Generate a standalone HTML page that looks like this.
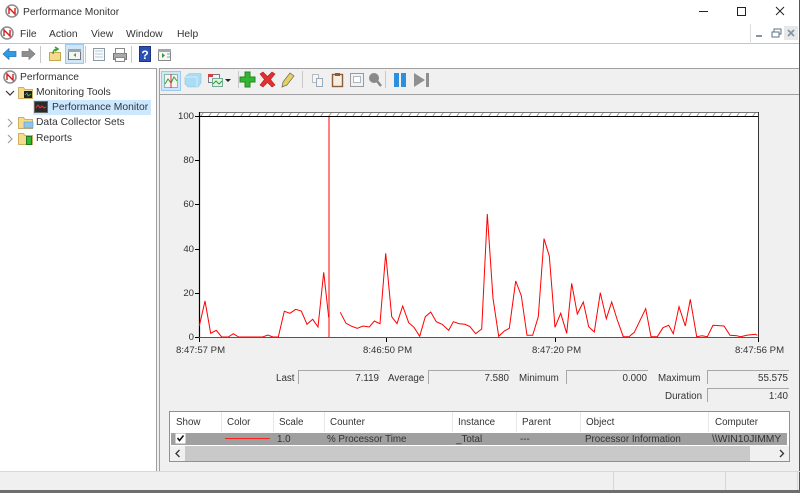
<!DOCTYPE html>
<html><head><meta charset="utf-8"><title>Performance Monitor</title>
<style>
html,body{margin:0;padding:0;width:800px;height:493px;overflow:hidden;background:#f0f0f0}
body{position:relative;font-family:"Liberation Sans",sans-serif;font-size:10.3px;color:#333}
.a{position:absolute}
.t{position:absolute;white-space:nowrap;line-height:13px}
.r{text-align:right}
.n{font-size:9.6px}
.l{font-size:9.8px}
.v{position:absolute;height:13px;width:81px;border-left:1px solid #a8a8a8;border-top:1px solid #a8a8a8;background:#f0f0f0;text-align:right;line-height:15px;box-sizing:content-box;color:#333;font-size:9.8px}
.v span{padding-right:1px}
.h{position:absolute;top:412px;height:20px;border-right:1px solid #e8e8e8;box-sizing:border-box}
svg{position:absolute;overflow:visible}
</style></head><body>
<div class="a" style="left:0;top:0;width:800px;height:68px;background:#fff"></div>
<div class="a" style="left:0;top:43px;width:800px;height:1px;background:#c4c4c4"></div>
<div class="a" style="left:0;top:68px;width:157px;height:403px;background:#fff;border-top:1px solid #a0a0a0;border-right:1px solid #a0a0a0;box-sizing:border-box"></div>
<div class="a" style="left:159px;top:68px;width:641px;height:403px;background:#f0f0f0;border-top:1px solid #a0a0a0;border-left:1px solid #a0a0a0;box-sizing:border-box"></div>
<div class="a" style="left:160px;top:94px;width:639px;height:1px;background:#a0a0a0"></div>
<div class="a" style="left:799px;top:0;width:1px;height:493px;background:#555"></div>
<div class="a" style="left:0;top:471px;width:800px;height:1px;background:#d8d8d8"></div>
<div class="a" style="left:0;top:472px;width:799px;height:18px;background:#f0f0f0"></div>
<div class="a" style="left:0;top:490px;width:800px;height:3px;background:#6e6e6e"></div>
<div class="a" style="left:613px;top:472px;width:1px;height:18px;background:#d8d8d8"></div>
<div class="a" style="left:725px;top:472px;width:1px;height:18px;background:#d8d8d8"></div>
<div class="a" style="left:797px;top:472px;width:1px;height:18px;background:#d8d8d8"></div>

<svg width="0" height="0" style="left:0;top:0"><defs>
<g id="pm"><circle cx="7" cy="7" r="6" fill="#fff" stroke="#8d8d8d" stroke-width="1.6"/><path d="M4 10V4L10 10V4" fill="none" stroke="#d02020" stroke-width="1.4"/></g>
<g id="folder"><path d="M.5 3.5V14.5H14.5V5.5H7L5.500 3.500Z" fill="#f4dc8c" stroke="#cdb066"/></g>
</defs></svg>

<!-- title -->
<svg style="left:5px;top:4px" width="14" height="14"><use href="#pm"/></svg>
<div class="t" style="left:23px;top:6px">Performance Monitor</div>
<svg style="left:680px;top:0" width="120" height="22" fill="none" stroke="#222"><path d="M19 11.500H28"/><rect x="57.500" y="7.500" width="8" height="8"/><path d="M96 7L104 15M104 7L96 15"/></svg>

<!-- menu -->
<svg style="left:0;top:26px" width="14" height="14"><use href="#pm"/></svg>
<div class="t" style="left:20px;top:27px;margin-top:0.5px">File</div>
<div class="t" style="left:49px;top:27px;margin-top:0.5px">Action</div>
<div class="t" style="left:91px;top:27px;margin-top:0.5px">View</div>
<div class="t" style="left:126px;top:27px;margin-top:0.5px">Window</div>
<div class="t" style="left:177px;top:27px;margin-top:0.5px">Help</div>
<div class="a" style="left:750px;top:24px;width:1px;height:20px;background:#ddd"></div>
<svg style="left:752px;top:26px" width="46" height="15" fill="none"><rect x="0" y="0" width="14" height="14" fill="#fff"/><path d="M4 10H10" stroke="#5a7184" stroke-width="1.500"/><path d="M20 6H27V11H20ZM22 6V3H29V8H27" stroke="#5a7184"/><rect x="32" y="0" width="14" height="14" fill="#e8e8e8"/><path d="M36 4L42 10M42 4L36 10" stroke="#7d95a6" stroke-width="1.600"/></svg>

<!-- main toolbar -->
<svg style="left:0;top:44px" width="190" height="24">
<path d="M3 10L9 4.500V7.500H16V12.500H9V15.500Z" fill="#2e9be6" stroke="#1e6fb8" stroke-width=".7"/>
<path d="M35 10L29 4.500V7.500H22V12.500H29V15.500Z" fill="#8e8e8e" stroke="#777" stroke-width=".7"/>
<rect x="40" y="2" width="1" height="17" fill="#c8c8c8"/>
<path d="M49.500 8.500V16.500H60.500V8.500Z" fill="#f4dc8c" stroke="#c8a64e"/><path d="M53 10C53 6 55 5 58 5M55 3L58 5L55 7" fill="none" stroke="#39a339" stroke-width="1.600"/>
<rect x="65.500" y=".5" width="18" height="19" fill="#cfe6f8" stroke="#9ccaef"/>
<rect x="68.500" y="5.500" width="12" height="10" fill="#f6f6f6" stroke="#777"/><path d="M68 5H81V8H68Z" fill="#9aa5ae"/><path d="M76 9V13L73.500 11Z" fill="#3aa53a"/>
<rect x="85" y="2" width="1" height="17" fill="#c8c8c8"/>
<rect x="93.500" y="4.500" width="11" height="12" fill="#fafafa" stroke="#8a9aa5"/><path d="M95 7H103M95 10H103M95 13H103" stroke="#bcd"/>
<path d="M113.500 9.500H126.500V15.500H113.500Z" fill="#a8a8a8" stroke="#777"/><rect x="115.500" y="4.500" width="9" height="5" fill="#fff" stroke="#888"/><rect x="115.500" y="13.500" width="9" height="4" fill="#fff" stroke="#888"/>
<rect x="131" y="2" width="1" height="17" fill="#c8c8c8"/>
<rect x="139.500" y="2.500" width="11" height="15" fill="#2b4fb5" stroke="#1d3480"/>
<text x="145" y="15" font-family="Liberation Sans" font-size="12" font-weight="bold" fill="#fff" text-anchor="middle">?</text>
<rect x="158.500" y="5.500" width="12" height="11" fill="#f6f6f6" stroke="#888"/><path d="M158 5H171V8H158Z" fill="#a0a8ae"/><path d="M162 9V14L165 11.500Z" fill="#2f9c2f"/><path d="M167 10H170M167 13H170" stroke="#7aa"/>
</svg>

<!-- tree -->
<svg style="left:3px;top:70px" width="14" height="14"><use href="#pm"/></svg>
<div class="t" style="left:20px;top:71px">Performance</div>
<svg style="left:5px;top:88px" width="10" height="10" fill="none" stroke="#333" stroke-width="1.200"><path d="M1 3L5 7L9 3"/></svg>
<svg style="left:18px;top:84px" width="15" height="15"><use href="#folder"/><rect x="6" y="7" width="8" height="7" fill="#222"/><path d="M7 11L9 9L10 12L13 10" stroke="#4c4" fill="none" stroke-width=".8"/></svg>
<div class="t" style="left:36px;top:86px">Monitoring Tools</div>
<div class="a" style="left:33px;top:100px;width:118px;height:15px;background:#cce8ff"></div>
<svg style="left:34px;top:101px" width="14" height="12"><rect x=".5" y=".5" width="13" height="11" fill="#2a2a2a" stroke="#666"/><path d="M2 7L4 4L6 7L8 5L10 7L12 6" stroke="#e33" fill="none"/></svg>
<div class="t" style="left:52px;top:101px">Performance Monitor</div>
<svg style="left:5px;top:118px" width="10" height="10" fill="none" stroke="#a0a0a0" stroke-width="1.200"><path d="M3 1L7 5L3 9"/></svg>
<svg style="left:18px;top:114px" width="15" height="15"><use href="#folder"/><rect x="6" y="8" width="9" height="6" fill="#8ec5e8" stroke="#5a9cc8" stroke-width=".6"/></svg>
<div class="t" style="left:36px;top:116px">Data Collector Sets</div>
<svg style="left:5px;top:134px" width="10" height="10" fill="none" stroke="#a0a0a0" stroke-width="1.200"><path d="M3 1L7 5L3 9"/></svg>
<svg style="left:18px;top:130px" width="15" height="15"><use href="#folder"/><rect x="8.500" y="6.500" width="5" height="8" fill="#33b533" stroke="#1c7c1c"/></svg>
<div class="t" style="left:36px;top:132px">Reports</div>

<!-- pane toolbar -->
<svg style="left:160px;top:69px" width="280" height="24">
<rect x="1.500" y="2.500" width="19" height="19" fill="#cfe6f8" stroke="#9ccaef"/>
<rect x="4.500" y="5.500" width="13" height="13" fill="#f4f4f4" stroke="#8ba"/><path d="M5 15L8 10L11 14L14 8L17 12" fill="none" stroke="#2fa52f"/><path d="M11 5V19" stroke="#e23"/>
<path d="M25 8L29 4.500H41V14L38 18H28L25 15Z" fill="#a9dcf5" stroke="#8fc4de" stroke-width=".6"/><path d="M25 8H37V18" fill="none" stroke="#d5eef9"/>
<rect x="48.500" y="5.500" width="11" height="8" fill="#f3f3f3" stroke="#778"/><rect x="48" y="5" width="5" height="3" fill="#d04040"/><rect x="52.500" y="9.500" width="10" height="8" fill="#e3f2e3" stroke="#7a9"/><path d="M53 15L56 12L59 15L62 12" stroke="#2a2" fill="none"/>
<path d="M65 10H71L68 13Z" fill="#222"/>
<rect x="78" y="2" width="1" height="17" fill="#c8c8c8"/>
<path d="M85 3H90V8H95V13H90V18H85V13H80V8H85Z" fill="#34b534" stroke="#1f8a1f"/>
<path d="M100 5L103 3L107.500 7.500L112 3L115 5L110.500 10.500L115 16L112 18L107.500 13.500L103 18L100 16L104.500 10.500Z" fill="#e03030" stroke="#b22020" stroke-width=".6"/>
<path d="M122 18L123 13L130 4L134 7L127 16Z" fill="#e8d060" stroke="#666" stroke-width=".7"/>
<rect x="142" y="2" width="1" height="17" fill="#c8c8c8"/>
<rect x="152.500" y="5.500" width="6" height="8" fill="#f5f5f5" stroke="#bbb"/><rect x="156.500" y="9.500" width="6" height="8" fill="#f5f5f5" stroke="#9ab"/>
<rect x="172.500" y="5.500" width="10" height="12" fill="#f4eee0" stroke="#8a5c38" stroke-width="1.400"/><rect x="175" y="4" width="5" height="3" fill="#8a5c38"/>
<rect x="190.500" y="4.500" width="13" height="13" fill="#f2f2f2" stroke="#9a9a9a"/><rect x="193.500" y="7.500" width="7" height="6" fill="#fff" stroke="#a9b9c4"/>
<circle cx="214" cy="9" r="4.500" fill="#8a8a8a" stroke="#888"/><path d="M217 12L221 17" stroke="#888" stroke-width="2.500"/>
<rect x="225" y="2" width="1" height="17" fill="#c8c8c8"/>
<rect x="234" y="4" width="5" height="14" fill="#2e8fdc"/><rect x="241" y="4" width="5" height="14" fill="#2e8fdc"/>
<path d="M254 4L265 11L254 18Z" fill="#8f8f8f"/><rect x="266" y="4" width="3" height="14" fill="#8f8f8f"/>
</svg>

<!-- graph -->
<svg style="left:0;top:0" width="800" height="493">
<defs><pattern id="ht" width="8" height="5" patternUnits="userSpaceOnUse" patternTransform="translate(199 112)"><path d="M1 5L5 0" stroke="#888" stroke-width=".8"/></pattern></defs>
<rect x="199" y="116" width="559" height="221" fill="#fff"/>
<rect x="199" y="112" width="559" height="4" fill="#fff"/>
<rect x="199" y="112" width="559" height="4" fill="url(#ht)"/>
<path d="M199 112.500H758" stroke="#777"/>
<path d="M199 116.500H758" stroke="#000"/>
<path d="M199.500 112V338" stroke="#000" stroke-width="1.200"/>
<path d="M758.500 112V338" stroke="#333"/>
<path d="M199 337.500H758" stroke="#555"/>
<path d="M195 116.500H199M195 160.500H199M195 204.500H199M195 249.500H199M195 293.500H199M195 337.500H199M199.500 338V342M386.500 338V342M555.500 338V342M758.500 338V342" stroke="#000"/>
<rect x="328" y="117" width="2" height="220" fill="#ff8080"/>
<polyline fill="none" stroke="#ff0000" stroke-width="1" points="199.3,326 205,301 210.700,333.300 216.300,330.300 221.700,337 228.300,337 233.300,333.700 238.700,337 262.700,337 267.700,335 273,337 278.300,337 284.300,311.300 290,313.300 295.700,309.300 301.300,311 307,324.300 312.700,319.300 318,327 323.700,272.300 328.700,317.300"/>
<polyline fill="none" stroke="#ff0000" stroke-width="1" points="340.300,312.300 346,323.300 351.700,326.300 357.300,328.300 363,326 369.300,327 374.300,321 380,323.700 385.700,253.300 391.700,316.700 397,323.700 402.700,306 408.700,322.700 414,327.300 419.700,336.300 425.300,316.700 430.700,312 436.300,321.700 442,324.300 448.700,330.300 453.300,321.700 459.300,323.700 465,324.300 470,326.700 475.700,333.700 481.700,329 487.300,214 493,298.300 498.700,336.300 504.300,331 509.300,328.300 515.700,281 521.300,295.700 527,335.300 532.700,335.300 538.300,316.700 544,238.700 549.300,256 555,327.300 560.700,313.300 566.700,333.300 571.700,283.300 577.300,314 583.300,302 588.700,326.700 594.300,332 600.300,292.700 606.300,318.700 611.700,302 617.300,320 623.300,336.700 629,336.700 634.300,332.300 645.700,308.700 651,336.700 657.300,336.700 663,327.700 668.700,325.300 673.300,333.700 679,306.700 685.300,326 690.300,299.300 696.700,336.700 702,335.700 707.300,336.700 713,325.300 724,326 730,335.300 736.700,335.700 740.700,336.700 746.700,335.300 755.300,334.300 757.300,335.300"/>
</svg>
<div class="t r n" style="left:165px;width:29px;top:110px">100</div>
<div class="t r n" style="left:165px;width:29px;top:154px">80</div>
<div class="t r n" style="left:165px;width:29px;top:198px">60</div>
<div class="t r n" style="left:165px;width:29px;top:243px">40</div>
<div class="t r n" style="left:165px;width:29px;top:287px">20</div>
<div class="t r n" style="left:165px;width:29px;top:331px">0</div>
<div class="t n" style="left:176px;top:344px">8:47:57 PM</div>
<div class="t n" style="left:363px;top:344px">8:46:50 PM</div>
<div class="t n" style="left:532px;top:344px">8:47:20 PM</div>
<div class="t n" style="left:735px;top:344px">8:47:56 PM</div>

<!-- stats -->
<div class="t l" style="left:276px;top:372px">Last</div>
<div class="v" style="left:298px;top:370px"><span>7.119</span></div>
<div class="t l" style="left:388px;top:372px">Average</div>
<div class="v" style="left:428px;top:370px"><span>7.580</span></div>
<div class="t l" style="left:519px;top:372px">Minimum</div>
<div class="v" style="left:566px;top:370px"><span>0.000</span></div>
<div class="t l" style="left:658px;top:372px">Maximum</div>
<div class="v" style="left:707px;top:370px"><span>55.575</span></div>
<div class="t l" style="left:665px;top:390px">Duration</div>
<div class="v" style="left:707px;top:388px"><span>1:40</span></div>

<!-- legend -->
<div class="a" style="left:169px;top:411px;width:621px;height:51px;background:#fff;border:1px solid #8a929a;box-sizing:border-box"></div>
<div class="h" style="left:170px;width:52px"></div>
<div class="h" style="left:222px;width:52px"></div>
<div class="h" style="left:274px;width:51px"></div>
<div class="h" style="left:325px;width:128px"></div>
<div class="h" style="left:453px;width:64px"></div>
<div class="h" style="left:517px;width:64px"></div>
<div class="h" style="left:581px;width:128px"></div>
<div class="t l" style="left:176px;top:416px">Show</div>
<div class="t l" style="left:227px;top:416px">Color</div>
<div class="t l" style="left:279px;top:416px">Scale</div>
<div class="t l" style="left:330px;top:416px">Counter</div>
<div class="t l" style="left:458px;top:416px">Instance</div>
<div class="t l" style="left:522px;top:416px">Parent</div>
<div class="t l" style="left:586px;top:416px">Object</div>
<div class="t l" style="left:715px;top:416px">Computer</div>
<div class="a" style="left:171px;top:433px;width:616px;height:12px;background:#a0a0a0"></div>
<svg style="left:175px;top:433px" width="11" height="12"><rect x=".5" y=".5" width="10" height="10" fill="#fff"/><path d="M2.500 5L4.500 7.500L8.500 2.500" fill="none" stroke="#111" stroke-width="1.500"/></svg>
<div class="a" style="left:225px;top:438px;width:45px;height:1px;background:#ff2020"></div>
<div class="t l" style="left:277px;top:433px">1.0</div>
<div class="t l" style="left:327px;top:433px">% Processor Time</div>
<div class="t l" style="left:456px;top:433px">_Total</div>
<div class="t l" style="left:520px;top:433px">---</div>
<div class="t l" style="left:585px;top:433px">Processor Information</div>
<div class="t" style="left:712px;top:433px;font-size:10.3px">\\WIN10JIMMY</div>
<div class="a" style="left:170px;top:446px;width:619px;height:15px;background:#f0f0f0"></div>
<div class="a" style="left:185px;top:446px;width:565px;height:15px;background:#c9c9c9"></div>
<svg style="left:174px;top:449px" width="8" height="9" fill="none" stroke="#333" stroke-width="1.300"><path d="M5.500 1L2 4.500L5.500 8"/></svg>
<svg style="left:778px;top:449px" width="8" height="9" fill="none" stroke="#333" stroke-width="1.300"><path d="M2 1L5.500 4.500L2 8"/></svg>
</body></html>
